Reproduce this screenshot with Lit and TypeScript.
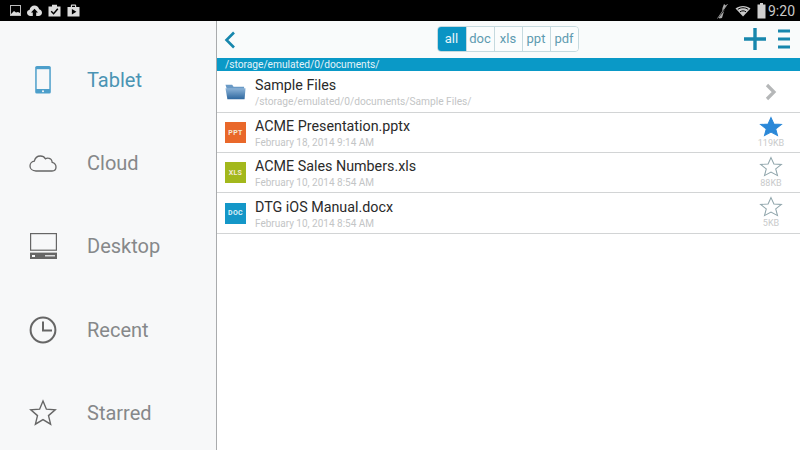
import { LitElement, html, css, svg } from "lit";
import { customElement } from "lit/decorators.js";

const starPts = "14,2 17.4,10.2 26.2,10.9 19.5,16.6 21.6,25.2 14,20.6 6.4,25.2 8.5,16.6 1.8,10.9 10.6,10.2";

const navIcons: Record<string, unknown> = {
  Tablet: svg`<svg width="28" height="30" viewBox="0 0 28 30"><rect x="6.2" y="1" width="15.6" height="27.6" rx="1.6" fill="#4d9fcb"/><rect x="7.7" y="4.2" width="12.6" height="19.8" fill="#f7f8f9"/><circle cx="14" cy="26.3" r="1" fill="#f7f8f9"/></svg>`,
  Cloud: svg`<svg width="28" height="30" viewBox="0 0 28 30"><path d="M7 23 C3 23 1 20.4 1 18 C1 15.4 3 13.4 5.3 13.2 C6 10 8.4 8 11.4 8 C13.6 8 15.4 9 16.5 10.8 C17.4 10.2 18.4 10 19.3 10.2 C21.5 10.5 23 12.3 23.2 14.4 C25.4 15 27 16.6 27 19 C27 21.4 25.2 23 23 23 Z" fill="none" stroke="#666" stroke-width="1.3"/></svg>`,
  Desktop: svg`<svg width="28" height="30" viewBox="0 0 28 30"><rect x="1.6" y="2.6" width="25.8" height="16.6" fill="none" stroke="#666" stroke-width="1.2"/><rect x="1" y="21.6" width="27" height="6.4" fill="#666"/><rect x="3" y="24" width="3" height="2" fill="#f7f8f9"/><rect x="16" y="24.2" width="10" height="1.2" fill="#f7f8f9"/></svg>`,
  Recent: svg`<svg width="28" height="30" viewBox="0 0 28 30"><circle cx="14" cy="15" r="12.4" fill="none" stroke="#666" stroke-width="2"/><path d="M14 6.5 V15.5 H23" fill="none" stroke="#666" stroke-width="2"/></svg>`,
  Starred: svg`<svg width="28" height="30" viewBox="0 0 28 28"><polygon points="${starPts}" fill="none" stroke="#666" stroke-width="1.4" stroke-linejoin="miter"/></svg>`,
};

const folder = svg`<svg width="22" height="16" viewBox="0 0 22 16"><defs><linearGradient id="fg" x1="0" y1="0" x2="0" y2="1"><stop offset="0" stop-color="#8db4d8"/><stop offset="1" stop-color="#2f689f"/></linearGradient></defs><path d="M0.5 0.5 H7.5 L9 2.5 H20 V5 H2 Z" fill="#6a9ac6"/><path d="M0.5 4 H21.5 L20.5 15.5 H2.5 Z" fill="url(#fg)"/></svg>`;

@customElement("app-root")
export class AppRoot extends LitElement {
  static styles = css`
    :host {
      display: flex;
      flex-direction: column;
      width: 800px;
      height: 450px;
      overflow: hidden;
      font-family: Roboto, "Liberation Sans", sans-serif;
      background: #fff;
    }
    .status {
      flex: none;
      height: 21px;
      background: #000;
      display: flex;
      align-items: center;
      padding: 0 5px 0 10px;
      gap: 6px;
    }
    .status svg { display: block; }
    .spacer { flex: 1; }
    .time {
      color: #c9c9c9;
      font-size: 14px;
      line-height: 20px;
      margin-left: -4px;
    }
    .main { flex: 1; display: flex; min-height: 0; }
    .side {
      flex: none;
      width: 217px;
      box-sizing: border-box;
      background: #f7f8f9;
      border-right: 1px solid #a9abad;
      padding-top: 17px;
    }
    .nav {
      height: 83.3px;
      display: flex;
      align-items: center;
      padding-left: 29px;
      gap: 30px;
      font-size: 20px;
      color: #86888a;
    }
    .nav svg { display: block; }
    .nav.on { color: #4a94b4; }
    .content { flex: 1; display: flex; flex-direction: column; min-width: 0; }
    .bar {
      flex: none;
      height: 37px;
      background: #f9fbfb;
      display: grid;
      grid-template-columns: 1fr auto 1fr;
      align-items: center;
      padding: 0 10px 0 7px;
    }
    .bar svg { display: block; }
    .acts { display: flex; justify-content: flex-end; align-items: center; gap: 12px; margin-top: -2px; }
    .seg {
      display: flex;
      height: 26px;
      box-sizing: border-box;
      border: 1px solid #c6dadf;
      border-radius: 4px;
      overflow: hidden;
      margin-top: -1px;
      margin-left: 1px;
    }
    .seg span {
      box-sizing: border-box;
      width: 28px;
      text-align: center;
      font-size: 13px;
      line-height: 24px;
      color: #5e9bb0;
      border-left: 1px solid #c6dadf;
      background: #fbfdfd;
    }
    .seg span:first-child { border-left: 0; background: #0a94c4; color: #e8f4f9; }
    .path {
      flex: none;
      height: 13px;
      background: #0a99c7;
      color: #e4f3f9;
      font-size: 10.2px;
      line-height: 13px;
      padding-left: 8px;
    }
    .row {
      flex: none;
      height: 40px;
      box-sizing: border-box;
      border-bottom: 1px solid #d2d4d5;
      display: flex;
      align-items: center;
      padding: 0 15px 0 8px;
    }
    .row.first { height: 42px; }
    .row.tall { height: 41px; }
    .ico {
      flex: none;
      width: 21px;
      height: 21px;
      margin-right: 9px;
      display: flex;
      align-items: center;
      justify-content: center;
      color: #f4e9d8;
      font-size: 7px;
      font-weight: 700;
      letter-spacing: 0.3px;
    }
    .ppt { background: #e9682a; }
    .xls { background: #a3b81c; }
    .doc { background: #1497c8; color: #dff2f9; }
    .txt { flex: 1; min-width: 0; display: flex; flex-direction: column; }
    .name { font-size: 14.3px; line-height: 19px; color: #2a2a2a; margin-top: 2px; }
    .sub { font-size: 10.2px; line-height: 14px; color: #c3c5c6; }
    .date { font-size: 10px; }
    .end {
      flex: none;
      width: 28px;
      display: flex;
      flex-direction: column;
      align-items: center;
      font-size: 9px;
      line-height: 10px;
      color: #c8cacb;
    }
    .end svg { display: block; }
    .star { margin-top: -2px; }
    .size { margin-top: 1px; }
  `;

  private statusLeft() {
    return html`
      <svg width="11" height="11" viewBox="0 0 11 11"><rect x="0.5" y="0.5" width="10" height="10" fill="none" stroke="#bbb"/><path d="M1 9 L4 6 L6 7.5 L8 7 L10 8 V10 H1 Z" fill="#ddd"/></svg>
      <svg width="15" height="11" viewBox="0 0 15 11"><path d="M3.5 11 C1.5 11 0 9.6 0 7.8 C0 6.2 1 5 2.6 4.7 C3 2.2 5 0.5 7.5 0.5 C9.8 0.5 11.6 2 12.2 4.2 C13.8 4.5 15 5.9 15 7.7 C15 9.6 13.5 11 11.5 11 H9.2 V7.6 H11 L7.5 3.8 L4 7.6 H5.8 V11 Z" fill="#ddd"/></svg>
      <svg width="13" height="13" viewBox="0 0 13 13"><path d="M0.5 2.5 H4 V0.8 H9 V2.5 H12.5 V12.5 H0.5 Z" fill="#ddd"/><path d="M3.2 7.3 L5.6 9.7 L9.8 4.8" fill="none" stroke="#000" stroke-width="1.5"/></svg>
      <svg width="13" height="13" viewBox="0 0 13 13"><path d="M0.5 3 H3.8 V1.6 C3.8 0.9 4.4 0.5 5 0.5 H8 C8.6 0.5 9.2 0.9 9.2 1.6 V3 H12.5 V12.5 H0.5 Z" fill="#ddd"/><path d="M4.9 5 L9.4 7.7 L4.9 10.4 Z" fill="#000"/><rect x="5" y="1.7" width="3" height="1.3" fill="#000"/></svg>`;
  }

  private statusRight() {
    return html`
      <svg width="13" height="16" viewBox="0 0 13 16"><path d="M8 1 L10.5 3 L9 5.5 L7.5 10 L6 15 L3.5 15.5 L2 14 L4 12 L6 9 L6.5 5 Z" fill="#aaa"/><path d="M1 15.5 L12 2" stroke="#000" stroke-width="1.5"/><path d="M1.5 15.5 L11.5 1" stroke="#aaa" stroke-width="0.8"/></svg>
      <svg width="16" height="12" viewBox="0 0 16 12"><path d="M8 11.5 L0.5 3.6 C4.5 0 11.5 0 15.5 3.6 Z" fill="#c8c8c8"/><path d="M2.8 4.4 C6 2.2 10 2.2 13.2 4.4 M5 6.8 C7 5.5 9 5.5 11 6.8" fill="none" stroke="#000" stroke-width="1"/></svg>
      <svg width="9" height="16" viewBox="0 0 9 16"><rect x="0.5" y="1.5" width="8" height="14" fill="#cfcfcf"/><rect x="3" y="0" width="3" height="2" fill="#cfcfcf"/></svg>
      <span class="time">9:20</span>`;
  }

  private star(filled: boolean) {
    return html`<svg class="star" width="24" height="21" viewBox="0 0 28 27" preserveAspectRatio="none">
      <polygon
        points="${starPts}"
        fill="${filled ? "#2a88d8" : "none"}"
        stroke="${filled ? "#2a88d8" : "#8fa5ab"}"
        stroke-width="1.2"
      />
    </svg>`;
  }

  private file(cls: string, label: string, name: string, date: string, fav: boolean, size: string, tall = false) {
    return html`<div class="row ${tall ? "tall" : ""}">
      <div class="ico ${cls}">${label}</div>
      <div class="txt">
        <div class="name">${name}</div>
        <div class="sub date">${date}</div>
      </div>
      <div class="end">${this.star(fav)}<span class="size">${size}</span></div>
    </div>`;
  }

  render() {
    const navs = ["Tablet", "Cloud", "Desktop", "Recent", "Starred"];
    return html`
      <div class="status">
        ${this.statusLeft()}
        <div class="spacer"></div>
        ${this.statusRight()}
      </div>
      <div class="main">
        <div class="side">
          ${navs.map(
            (n, i) => html`<div class="nav ${i === 0 ? "on" : ""}">${navIcons[n]}<span>${n}</span></div>`
          )}
        </div>
        <div class="content">
          <div class="bar">
            <svg width="12" height="18" viewBox="0 0 12 18"><path d="M10 1.5 L2.5 9 L10 16.5" fill="none" stroke="#1787ad" stroke-width="2.6"/></svg>
            <div class="seg">
              <span>all</span><span>doc</span><span>xls</span><span>ppt</span><span>pdf</span>
            </div>
            <div class="acts">
              <svg width="22" height="22" viewBox="0 0 22 22"><path d="M0 11 H22 M11 0 V22" stroke="#1787ad" stroke-width="3.4"/></svg>
              <svg width="12" height="20" viewBox="0 0 12 20"><path d="M0 2 H12 M0 10 H12 M0 18 H12" stroke="#1787ad" stroke-width="3"/></svg>
            </div>
          </div>
          <div class="path">/storage/emulated/0/documents/</div>
          <div class="row first">
            <div class="ico">${folder}</div>
            <div class="txt">
              <div class="name">Sample Files</div>
              <div class="sub">/storage/emulated/0/documents/Sample Files/</div>
            </div>
            <div class="end">
              <svg width="12" height="18" viewBox="0 0 12 18"><path d="M2 2 L9 9 L2 16" fill="none" stroke="#b5b7b8" stroke-width="3.2"/></svg>
            </div>
          </div>
          ${this.file("ppt", "PPT", "ACME Presentation.pptx", "February 18, 2014 9:14 AM", true, "119KB")}
          ${this.file("xls", "XLS", "ACME Sales Numbers.xls", "February 10, 2014 8:54 AM", false, "88KB")}
          ${this.file("doc", "DOC", "DTG iOS Manual.docx", "February 10, 2014 8:54 AM", false, "5KB", true)}
        </div>
      </div>
    `;
  }
}
